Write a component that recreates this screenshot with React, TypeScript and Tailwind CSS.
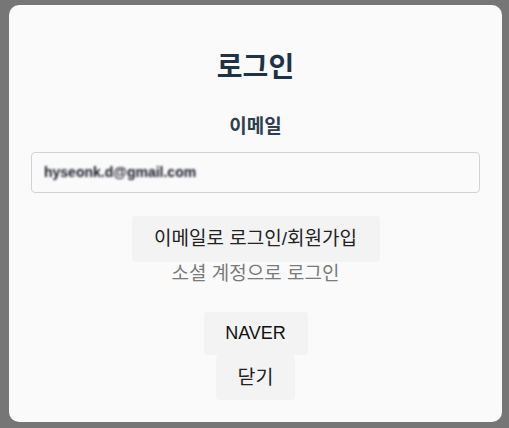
export default function App() {
  return (
    <div className="h-[428px] w-[509px] bg-[#767676] pt-[5px] pl-[9px] pr-[7px] pb-[6px] font-['Liberation_Sans','Noto_Sans_CJK_KR',sans-serif]">
      <div className="flex h-full flex-col items-center rounded-[10px] bg-[#fafafa] px-[22px] pt-[45px]">
        <h1 className="h-[36px] text-[28px] font-bold leading-[36px] text-[#1f3347]">
          로그인
        </h1>
        <div className="mt-[29px] h-[24px] text-[19px] font-bold leading-[24px] text-[#2c3e50]">
          이메일
        </div>
        <div className="mt-[13px] flex h-[41px] w-full items-center rounded-[4px] border border-[#d3d3d3] bg-[#fafafa] px-[12px]">
          <span className="text-[14px] font-bold text-[#1a1a2a] blur-[1px]">
            hyseonk.d@gmail.com
          </span>
        </div>
        <button className="mt-[23px] h-[46px] w-[248px] rounded-[4px] bg-[#f3f3f3] text-[19px] text-[#222]">
          이메일로 로그인/회원가입
        </button>
        <div className="h-[24px] text-[19px] leading-[24px] text-[#7a7a7a]">
          소셜 계정으로 로그인
        </div>
        <button className="mt-[26px] h-[43px] w-[104px] rounded-[4px] bg-[#f3f3f3] text-[18px] text-[#111]">
          NAVER
        </button>
        <button className="h-[45px] w-[79px] rounded-[4px] bg-[#f3f3f3] text-[19.5px] text-[#222]">
          닫기
        </button>
      </div>
    </div>
  );
}
